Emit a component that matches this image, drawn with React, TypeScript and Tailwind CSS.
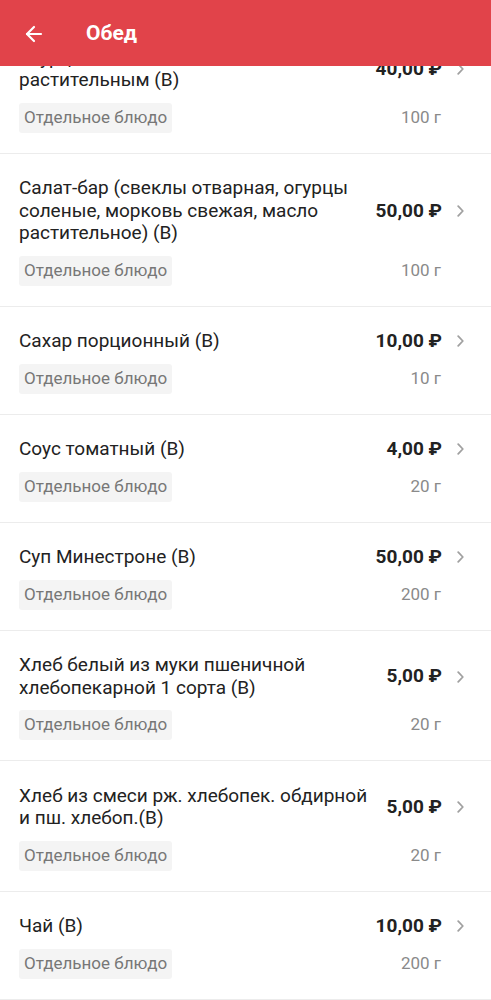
import { ArrowLeft } from "lucide-react";

interface Dish {
  title: string;
  price: string;
  weight: string;
}

const dishes: Dish[] = [
  { title: "Огурцы свежие с маслом растительным (В)", price: "40,00 ₽", weight: "100 г" },
  {
    title: "Салат-бар (свеклы отварная, огурцы соленые, морковь свежая, масло растительное) (В)",
    price: "50,00 ₽",
    weight: "100 г",
  },
  { title: "Сахар порционный (В)", price: "10,00 ₽", weight: "10 г" },
  { title: "Соус томатный (В)", price: "4,00 ₽", weight: "20 г" },
  { title: "Суп Минестроне (В)", price: "50,00 ₽", weight: "200 г" },
  { title: "Хлеб белый из муки пшеничной хлебопекарной 1 сорта (В)", price: "5,00 ₽", weight: "20 г" },
  { title: "Хлеб из смеси рж. хлебопек. обдирной и пш. хлебоп.(В)", price: "5,00 ₽", weight: "20 г" },
  { title: "Чай (В)", price: "10,00 ₽", weight: "200 г" },
];

function Chevron() {
  return (
    <svg width="7" height="12" viewBox="0 0 7 12" className="block">
      <polyline points="1.2,1.2 5.8,6 1.2,10.8" fill="none" stroke="#a0a0a0" strokeWidth="1.8" strokeLinecap="round" strokeLinejoin="round" />
    </svg>
  );
}

function DishRow({ dish }: { dish: Dish }) {
  return (
    <div className="border-b border-[#ececec] pl-[19px] pr-[27px] pt-[23.5px] pb-[20px]">
      <div className="flex items-center">
        <div className="flex-1 pr-[16px] text-[19px] leading-[22.5px] text-[#222]">{dish.title}</div>
        <span className="text-[19px] leading-[22.5px] font-bold text-[#222] whitespace-nowrap">{dish.price}</span>
        <div className="w-[22px] flex justify-end">
          <Chevron />
        </div>
      </div>
      <div className="mt-[11px] flex items-center">
        <span className="rounded-[3px] bg-[#f4f4f4] px-[5px] h-[30px] flex items-center text-[17px] text-[#777]">
          Отдельное блюдо
        </span>
        <span className="ml-auto mr-[23px] text-[17px] text-[#8a8a8a]">{dish.weight}</span>
      </div>
    </div>
  );
}

export default function App() {
  return (
    <div className="min-h-screen bg-white" style={{ fontFamily: "Roboto, 'Noto Sans', sans-serif" }}>
      <header className="fixed top-0 left-0 right-0 z-10 h-[66px] pt-[2px] bg-[#e1434a] flex items-center text-white">
        <ArrowLeft size={24} strokeWidth={2.2} className="ml-[22px]" />
        <span className="ml-[40px] text-[21px] font-bold">Обед</span>
      </header>
      <div className="pt-[23px]">
        {dishes.map((d, i) => (
          <DishRow key={i} dish={d} />
        ))}
      </div>
    </div>
  );
}
